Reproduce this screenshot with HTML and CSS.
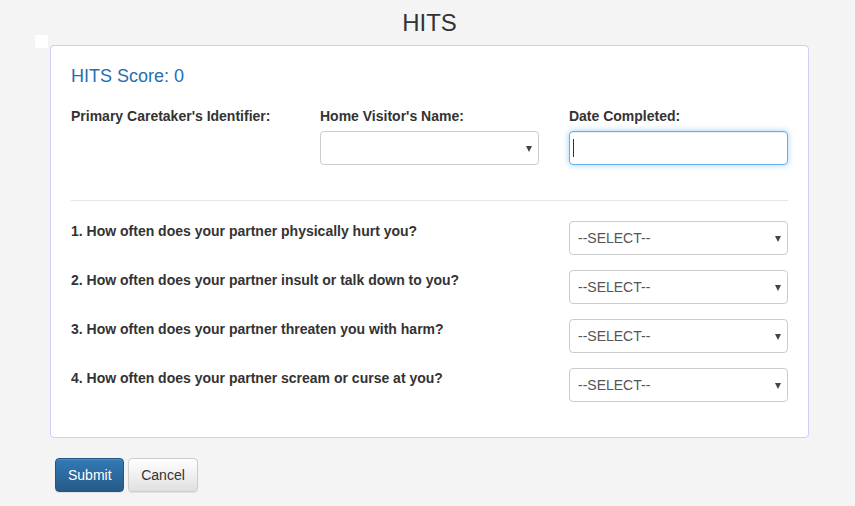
FILE: index.html
```html
<!DOCTYPE html>
<html>
<head>
<meta charset="utf-8">
<link rel="stylesheet" href="styles.css">
</head>
<body>
<h1 class="title">HITS</h1>
<div class="marker"></div>
<div class="panel">
  <h4 class="score">HITS Score: 0</h4>
  <div class="row top-row">
    <div class="col">
      <label class="lbl">Primary Caretaker's Identifier:</label>
    </div>
    <div class="col">
      <label class="lbl">Home Visitor's Name:</label>
      <div class="select-wrap"><select class="ctl"><option></option></select></div>
    </div>
    <div class="col">
      <label class="lbl">Date Completed:</label>
      <div class="input-wrap"><input class="ctl focused" type="text"><span class="caret"></span></div>
    </div>
  </div>
  <hr class="sep">
  <div class="q-row">
    <label class="lbl q">1. How often does your partner physically hurt you?</label>
    <div class="q-ctl"><div class="select-wrap"><select class="ctl"><option>--SELECT--</option></select></div></div>
  </div>
  <div class="q-row">
    <label class="lbl q">2. How often does your partner insult or talk down to you?</label>
    <div class="q-ctl"><div class="select-wrap"><select class="ctl"><option>--SELECT--</option></select></div></div>
  </div>
  <div class="q-row">
    <label class="lbl q">3. How often does your partner threaten you with harm?</label>
    <div class="q-ctl"><div class="select-wrap"><select class="ctl"><option>--SELECT--</option></select></div></div>
  </div>
  <div class="q-row">
    <label class="lbl q">4. How often does your partner scream or curse at you?</label>
    <div class="q-ctl"><div class="select-wrap"><select class="ctl"><option>--SELECT--</option></select></div></div>
  </div>
</div>
<div class="actions">
  <button class="btn btn-primary">Submit</button>
  <button class="btn btn-default">Cancel</button>
</div>
</body>
</html>
```
FILE: styles.css
```css
* { box-sizing: border-box; }
html, body { margin: 0; padding: 0; }
body {
  background: #f4f4f4;
  font-family: "Liberation Sans", Arial, sans-serif;
  font-size: 14px;
  line-height: 20px;
  color: #333;
  position: relative;
  height: 506px;
}
.title {
  margin: 0;
  padding: 9px 0 0 4px;
  height: 45px;
  font-size: 24px;
  line-height: 27px;
  font-weight: normal;
  text-align: center;
  color: #333;
}
.marker {
  position: absolute;
  left: 35px;
  top: 35px;
  width: 13px;
  height: 13px;
  background: #fff;
}
.panel {
  margin-left: 50px;
  width: 759px;
  background: #fff;
  border: 1px solid #cfcff3;
  border-radius: 4px;
  padding: 20px 20px 20px 20px;
}
.score {
  margin: 0 0 20px 0;
  font-size: 18px;
  line-height: 20px;
  font-weight: normal;
  color: #1f6fb2;
}
.row {
  display: flex;
  margin: 0 -15px;
}
.col {
  width: 33.3333%;
  padding: 0 15px;
}
.top-row { padding-bottom: 15px; }
.lbl {
  display: block;
  font-weight: bold;
  margin-bottom: 5px;
  line-height: 20px;
}
.select-wrap, .input-wrap {
  position: relative;
  width: 100%;
}
.ctl {
  display: block;
  width: 100%;
  height: 34px;
  padding: 6px 8px;
  font-family: "Liberation Sans", Arial, sans-serif;
  font-size: 14px;
  color: #555;
  background: #fff;
  border: 1px solid #ccc;
  border-radius: 4px;
  -webkit-appearance: none;
  appearance: none;
  outline: none;
}
.select-wrap::after {
  content: "";
  position: absolute;
  right: 7px;
  top: 15px;
  border-left: 3.5px solid transparent;
  border-right: 3.5px solid transparent;
  border-top: 6px solid #444;
}
.ctl.focused {
  border-color: #66afe9;
  box-shadow: inset 0 1px 1px rgba(0,0,0,.075), 0 0 6px rgba(102,175,233,.6);
}
.caret {
  position: absolute;
  left: 4px;
  top: 8px;
  width: 1px;
  height: 18px;
  background: #333;
}
.sep {
  margin: 20px 0 20px 0;
  border: 0;
  border-top: 1px solid #e5e5e5;
  height: 0;
}
.q-row {
  display: flex;
  margin: 0 -15px 15px -15px;
}
.q-row .q {
  width: 66.6667%;
  padding: 0 15px;
  margin: 0;
}
.q-ctl {
  width: 33.3333%;
  padding: 0 15px;
}
.actions {
  display: flex;
  gap: 4px;
  margin-left: 55px;
  margin-top: 20px;
}
.btn {
  height: 34px;
  padding: 6px 12px;
  font-family: "Liberation Sans", Arial, sans-serif;
  font-size: 14px;
  line-height: 20px;
  border-radius: 4px;
  cursor: pointer;
}
.btn-primary {
  width: 69px;
  color: #fff;
  border: 1px solid #245580;
  background: linear-gradient(to bottom, #337ab7 0%, #265a88 100%);
  box-shadow: inset 0 1px 0 rgba(255,255,255,.15), 0 1px 1px rgba(0,0,0,.075);
}
.btn-default {
  width: 70px;
  color: #333;
  border: 1px solid #ccc;
  background: linear-gradient(to bottom, #fff 0%, #e0e0e0 100%);
  box-shadow: inset 0 1px 0 rgba(255,255,255,.15), 0 1px 1px rgba(0,0,0,.075);
}
```
